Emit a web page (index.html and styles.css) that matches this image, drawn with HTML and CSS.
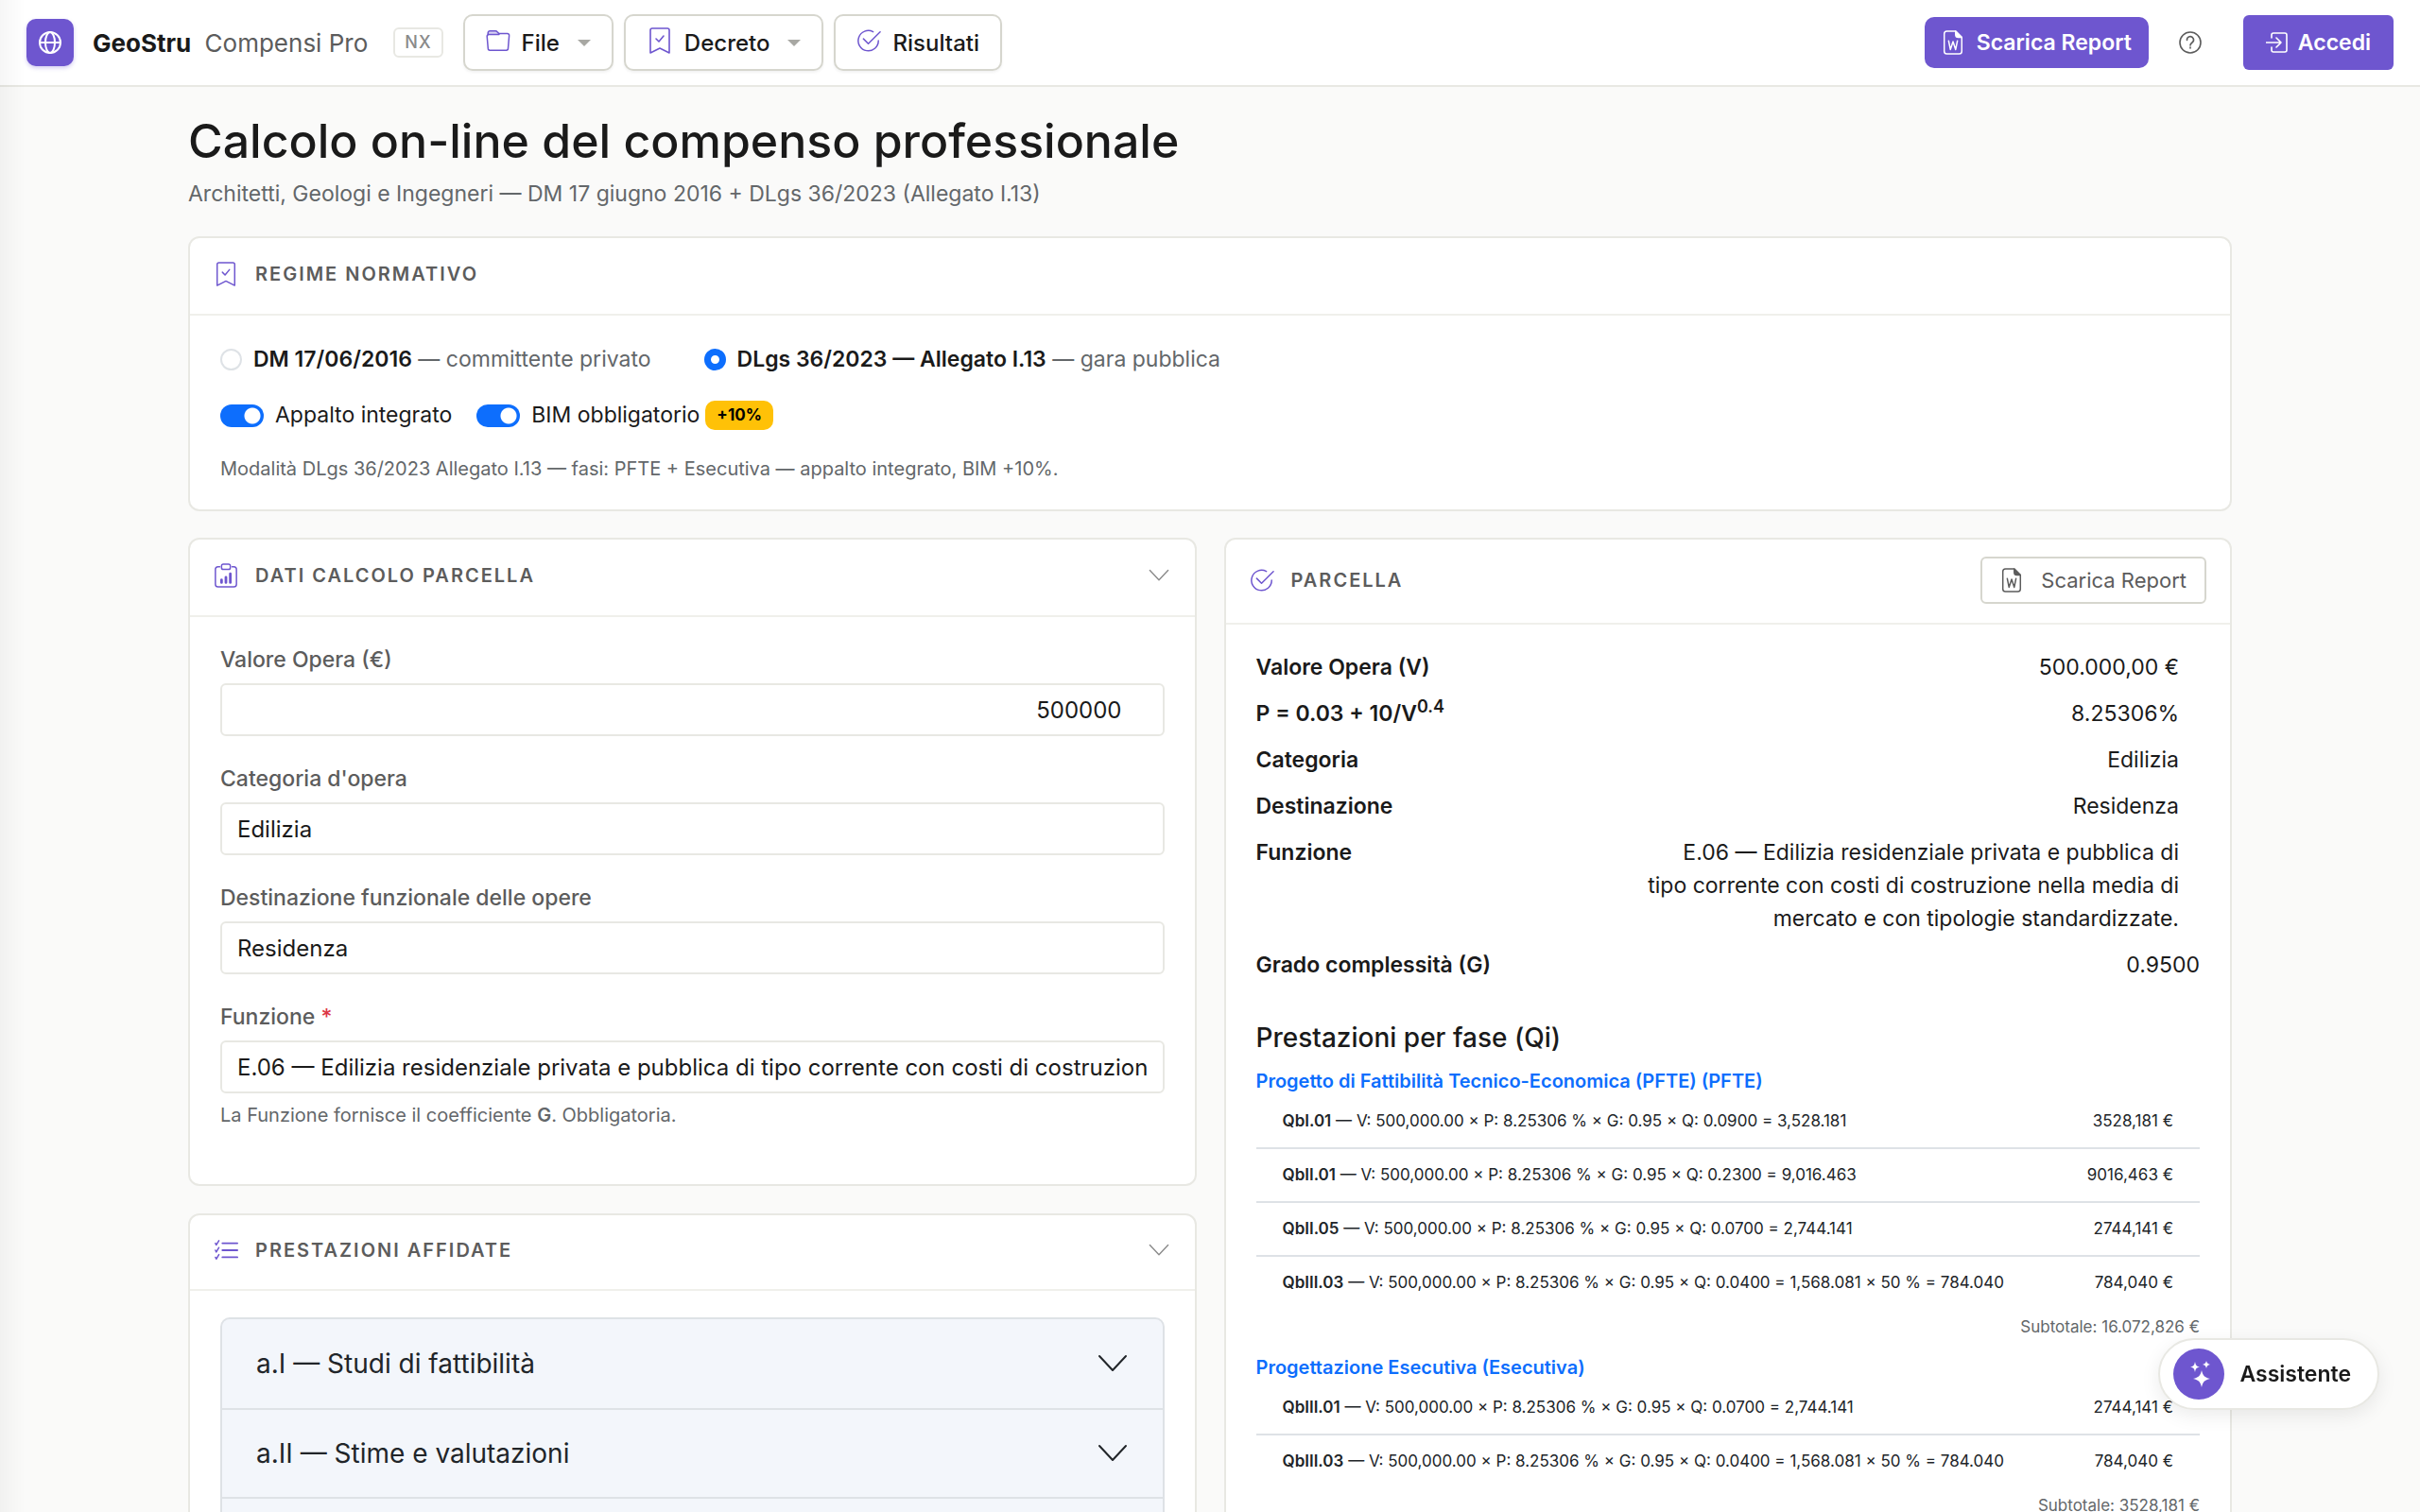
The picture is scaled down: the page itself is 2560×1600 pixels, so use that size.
FILE: index.html
```html
<!DOCTYPE html>
<html lang="it">
<head>
    <meta charset="UTF-8">
    <meta name="viewport" content="width=device-width, initial-scale=1.0">
    <title>GeoStru Compensi Pro</title>
    <link rel="stylesheet" href="styles.css">
</head>
<body>
    <!-- Shared icons -->
    <svg class="sprite" aria-hidden="true">
        <symbol id="i-globe" viewBox="0 0 24 24"><circle cx="12" cy="12" r="11"/><ellipse cx="12" cy="12" rx="5" ry="11"/><path d="M1 12h22"/></symbol>
        <symbol id="i-folder" viewBox="0 0 28 28"><path class="tab" d="M2 7 2.500 5a2 2 0 0 1 2-2h6.500a3 3 0 0 1 2 1l3 3z"/><path d="M2 8 2.500 5a2 2 0 0 1 2-2h6.500a3 3 0 0 1 2 1l1 1a3 3 0 0 0 2 1h8.500a2 2 0 0 1 2 2.500l-1.200 14.500a2 2 0 0 1-2 2H4.500a2 2 0 0 1-2-2L1.300 9a2 2 0 0 1 2-2H15"/></symbol>
        <symbol id="i-bookmark" viewBox="0 0 28 28"><path d="M4 27V3a2 2 0 0 1 2-2h16a2 2 0 0 1 2 2v24l-10-5z"/><path d="m10 12 3 3 5-6"/></symbol>
        <symbol id="i-check" viewBox="0 0 28 28"><path d="M19 4A11.500 11.500 0 1 0 25 14"/><path d="m8 12 5.500 5.500L27 4"/></symbol>
        <symbol id="i-clipboard" viewBox="0 0 28 28"><path d="M7 4H5a3 3 0 0 0-3 3v17a3 3 0 0 0 3 3h18a3 3 0 0 0 3-3V7a3 3 0 0 0-3-3h-2"/><rect x="9" y="1" width="10" height="6" rx="2"/><path class="bars" d="M9 19v3M14 16v6M19 12v10"/></symbol>
        <symbol id="i-list" viewBox="0 0 28 28"><path class="rules" d="M10 6h17M10 14h17M10 22h17"/><path d="M2 6l1 2 3-5M2 14l1 2 3-5M2 22l1 2 3-5"/></symbol>
        <symbol id="i-word" viewBox="0 0 22 28"><path d="M4 1h10l7 7v16a3 3 0 0 1-3 3H4a3 3 0 0 1-3-3V4a3 3 0 0 1 3-3z"/><path class="fold" d="M14 1v4a3 3 0 0 0 3 3h4z"/><path d="m6 12 2 10 3-9 3 9 2-10"/></symbol>
        <symbol id="i-help" viewBox="0 0 24 24"><circle cx="12" cy="12" r="11"/><path d="M8.500 9.500a3.500 3.500 0 1 1 5.500 2.500c-1.300.9-2 1.500-2 3"/><path d="M12 17v1"/></symbol>
        <symbol id="i-login" viewBox="0 0 24 24"><path d="M6 7V4a2 2 0 0 1 2-2h12a2 2 0 0 1 2 2v16a2 2 0 0 1-2 2H8a2 2 0 0 1-2-2v-3M0 12h16M11 7l5 5-5 5"/></symbol>
        <symbol id="i-chevron" viewBox="0 0 32 32"><path d="m2 8 14 15L30 8"/></symbol>
        <symbol id="i-sparkle" viewBox="0 0 32 32"><path d="M19 12c1.400 6 3 7.500 9 9-6 1.500-7.600 3-9 9-1.400-6-3-7.500-9-9 6-1.500 7.600-3 9-9zM12 3c.8 4 1.600 4.800 5 5.500-3.400.8-4.200 1.600-5 5.500-.8-3.900-1.600-4.700-5-5.500 3.400-.7 4.200-1.500 5-5.500zM24 2c.6 2.400 1.200 3 4 4-2.800.8-3.400 1.500-4 4-.6-2.500-1.200-3.200-4-4 2.800-1 3.400-1.600 4-4z"/></symbol>
    </svg>

    <header class="topbar">
        <span class="logo"><svg class="icon"><use href="#i-globe"/></svg></span>
        <span class="brand"><strong>GeoStru</strong> <span>Compensi Pro</span></span>
        <span class="edition">NX</span>
        <nav class="menu">
            <button type="button" class="menu-button"><svg class="icon"><use href="#i-folder"/></svg>File<span class="caret"></span></button>
            <button type="button" class="menu-button"><svg class="icon tall"><use href="#i-bookmark"/></svg>Decreto<span class="caret"></span></button>
            <button type="button" class="menu-button"><svg class="icon"><use href="#i-check"/></svg>Risultati</button>
        </nav>
        <div class="actions">
            <button type="button" class="btn-primary report"><svg class="icon"><use href="#i-word"/></svg>Scarica Report</button>
            <button type="button" class="help" aria-label="Aiuto"><svg class="icon"><use href="#i-help"/></svg></button>
            <button type="button" class="btn-primary login"><svg class="icon"><use href="#i-login"/></svg>Accedi</button>
        </div>
    </header>

    <main>
        <div class="container">
            <h1>Calcolo on-line del compenso professionale</h1>
            <p class="subtitle">Architetti, Geologi e Ingegneri — DM 17 giugno 2016 + DLgs 36/2023 (Allegato I.13)</p>

            <section class="card">
                <div class="card-header">
                    <svg class="icon"><use href="#i-bookmark"/></svg>
                    <h2>Regime normativo</h2>
                </div>
                <div class="card-body regime">
                    <div class="radios">
                        <label><input type="radio" name="regime"><span><strong>DM 17/06/2016</strong> — committente privato</span></label>
                        <label><input type="radio" name="regime" checked><span><strong>DLgs 36/2023 — Allegato I.13</strong> — gara pubblica</span></label>
                    </div>
                    <div class="switches">
                        <label><input type="checkbox" class="switch" checked>Appalto integrato</label>
                        <label><input type="checkbox" class="switch" checked>BIM obbligatorio <span class="badge">+10%</span></label>
                    </div>
                    <p class="hint">Modalità DLgs 36/2023 Allegato I.13 — fasi: PFTE + Esecutiva — appalto integrato, BIM +10%.</p>
                </div>
            </section>

            <div class="columns">
                <div class="column">
                    <section class="card">
                        <div class="card-header">
                            <svg class="icon"><use href="#i-clipboard"/></svg>
                            <h2>Dati calcolo parcella</h2>
                            <button type="button" class="toggle" aria-label="Comprimi"><svg class="icon"><use href="#i-chevron"/></svg></button>
                        </div>
                        <form class="card-body form">
                            <div class="field">
                                <label for="valore">Valore Opera (€)</label>
                                <input type="text" id="valore" class="amount" value="500000">
                            </div>
                            <div class="field">
                                <label for="categoria">Categoria d'opera</label>
                                <input type="text" id="categoria" value="Edilizia">
                            </div>
                            <div class="field">
                                <label for="destinazione">Destinazione funzionale delle opere</label>
                                <input type="text" id="destinazione" value="Residenza">
                            </div>
                            <div class="field">
                                <label for="funzione">Funzione <span class="required">*</span></label>
                                <input type="text" id="funzione" value="E.06 — Edilizia residenziale privata e pubblica di tipo corrente con costi di costruzione nella media di mercato e con tipologie standardizzate.">
                                <p class="hint">La Funzione fornisce il coefficiente <strong>G</strong>. Obbligatoria.</p>
                            </div>
                        </form>
                    </section>

                    <section class="card">
                        <div class="card-header compact">
                            <svg class="icon"><use href="#i-list"/></svg>
                            <h2>Prestazioni affidate</h2>
                            <button type="button" class="toggle" aria-label="Comprimi"><svg class="icon"><use href="#i-chevron"/></svg></button>
                        </div>
                        <div class="card-body">
                            <div class="accordion">
                                <button type="button">a.I — Studi di fattibilità<svg class="icon"><use href="#i-chevron"/></svg></button>
                                <button type="button">a.II — Stime e valutazioni<svg class="icon"><use href="#i-chevron"/></svg></button>
                                <button type="button" aria-label="a.III"><svg class="icon"><use href="#i-chevron"/></svg></button>
                            </div>
                        </div>
                    </section>
                </div>

                <div class="column">
                    <section class="card">
                        <div class="card-header with-button">
                            <svg class="icon"><use href="#i-check"/></svg>
                            <h2>Parcella</h2>
                            <button type="button" class="btn-outline"><svg class="icon"><use href="#i-word"/></svg>Scarica Report</button>
                        </div>
                        <div class="card-body result">
                            <dl class="summary">
                                <div><dt>Valore Opera (V)</dt><dd>500.000,00 €</dd></div>
                                <div><dt>P = 0.03 + 10/V<sup>0.4</sup></dt><dd>8.25306%</dd></div>
                                <div><dt>Categoria</dt><dd>Edilizia</dd></div>
                                <div><dt>Destinazione</dt><dd>Residenza</dd></div>
                                <div><dt>Funzione</dt><dd>E.06 — Edilizia residenziale privata e pubblica di tipo corrente con costi di costruzione nella media di mercato e con tipologie standardizzate.</dd></div>
                                <div class="grade"><dt>Grado complessità (G)</dt><dd>0.9500</dd></div>
                            </dl>

                            <h3>Prestazioni per fase (Qi)</h3>

                            <h4>Progetto di Fattibilità Tecnico-Economica (PFTE) (PFTE)</h4>
                            <table>
                                <tr><td><strong>QbI.01</strong> — V: 500,000.00 × P: 8.25306 % × G: 0.95 × Q: 0.0900 = 3,528.181</td><td>3528,181 €</td></tr>
                                <tr><td><strong>QbII.01</strong> — V: 500,000.00 × P: 8.25306 % × G: 0.95 × Q: 0.2300 = 9,016.463</td><td>9016,463 €</td></tr>
                                <tr><td><strong>QbII.05</strong> — V: 500,000.00 × P: 8.25306 % × G: 0.95 × Q: 0.0700 = 2,744.141</td><td>2744,141 €</td></tr>
                                <tr><td><strong>QbIII.03</strong> — V: 500,000.00 × P: 8.25306 % × G: 0.95 × Q: 0.0400 = 1,568.081 × 50 % = 784.040</td><td>784,040 €</td></tr>
                            </table>
                            <p class="subtotal">Subtotale: 16.072,826 €</p>

                            <h4>Progettazione Esecutiva (Esecutiva)</h4>
                            <table>
                                <tr><td><strong>QbIII.01</strong> — V: 500,000.00 × P: 8.25306 % × G: 0.95 × Q: 0.0700 = 2,744.141</td><td>2744,141 €</td></tr>
                                <tr><td><strong>QbIII.03</strong> — V: 500,000.00 × P: 8.25306 % × G: 0.95 × Q: 0.0400 = 1,568.081 × 50 % = 784.040</td><td>784,040 €</td></tr>
                            </table>
                            <p class="subtotal">Subtotale: 3528,181 €</p>
                        </div>
                    </section>
                </div>
            </div>
        </div>
    </main>

    <button type="button" class="assistant"><span class="assistant-icon"><svg class="icon"><use href="#i-sparkle"/></svg></span>Assistente</button>
    <div class="edge-shadow"></div>
</body>
</html>
```

FILE: styles.css
```css
:root {
    --purple: #6e56cf;
    --blue: #0d6efd;
    --text: #1a1a1a;
    --muted: #5c5c5c;
    --border: #e8e8e3;
    --border-strong: #d6d6ce;
}

* {
    box-sizing: border-box;
}

body {
    margin: 0;
    height: 100vh;
    display: flex;
    flex-direction: column;
    overflow: hidden;
    background: #fafaf9;
    color: var(--text);
    font-family: Inter, "Liberation Sans", sans-serif;
    font-size: 23px;
    line-height: 35px;
}

h1, h2, h3, h4, p, dl, dd {
    margin: 0;
}

button, input {
    font: inherit;
    color: inherit;
}

button {
    display: flex;
    align-items: center;
    background: none;
    border: 0;
    padding: 0;
    cursor: pointer;
}

strong {
    font-weight: 600;
}

.sprite {
    position: absolute;
    width: 0;
    height: 0;
}

.icon {
    flex: none;
    width: 26px;
    height: 28px;
    fill: none;
    stroke: currentColor;
    stroke-width: 1.6;
    stroke-linecap: round;
    stroke-linejoin: round;
}

.bars {
    stroke-width: 3;
}

.rules {
    stroke-width: 2;
}

.fold {
    fill: currentColor;
}

.tab {
    fill: #d9d3f2;
    stroke: none;
}

/* Top bar */
.topbar {
    flex: none;
    display: flex;
    align-items: center;
    height: 92px;
    padding: 0 28px;
    background: #fff;
    border-bottom: 2px solid var(--border);
}

.logo {
    display: flex;
    align-items: center;
    justify-content: center;
    width: 50px;
    height: 50px;
    border-radius: 10px;
    background: var(--purple);
    color: #fff;
    box-shadow: 0 2px 4px rgba(110, 86, 207, 0.3);
}

.logo .icon {
    width: 24px;
    height: 24px;
    stroke-width: 2;
}

.brand {
    margin-left: 20px;
    font-size: 26px;
    color: var(--muted);
    white-space: nowrap;
}

.brand strong {
    margin-right: 7px;
    color: var(--text);
    font-weight: 700;
}

.edition {
    margin-left: 27px;
    height: 32px;
    padding: 0 10px;
    border: 2px solid var(--border);
    border-radius: 6px;
    color: #8a8a8a;
    font-size: 18px;
    font-weight: 500;
    line-height: 28px;
    letter-spacing: 1px;
}

.menu {
    display: flex;
    gap: 11px;
    margin-left: 21px;
}

.menu-button {
    height: 60px;
    padding: 0 22px;
    border: 2px solid var(--border-strong);
    border-radius: 10px;
    background: #fff;
    box-shadow: 0 2px 3px rgba(0, 0, 0, 0.05);
    font-size: 24px;
    font-weight: 500;
}

.menu-button .icon {
    margin: 0 12px 4px 0;
    color: var(--purple);
}

.menu-button .tall {
    width: 28px;
}

.caret {
    margin-left: 19px;
    border: 7px solid transparent;
    border-top-color: #a8a8a3;
    border-bottom: 0;
}

.actions {
    display: flex;
    align-items: center;
    margin-left: auto;
}

.btn-primary {
    background: var(--purple);
    color: #fff;
    font-weight: 600;
}

.report {
    height: 54px;
    padding: 0 18px;
    gap: 13px;
    border-radius: 10px;
}

.report .icon {
    width: 24px;
    height: 26px;
}

.help {
    margin: 0 44px 0 32px;
    color: var(--muted);
}

.help .icon {
    width: 24px;
    height: 24px;
}

.login {
    height: 58px;
    padding: 0 24px;
    gap: 10px;
    border-radius: 6px;
}

.login .icon {
    width: 24px;
    height: 24px;
}

/* Page */
main {
    flex: 1;
    min-height: 0;
    overflow-y: auto;
    scrollbar-width: none;
}

.container {
    max-width: 2162px;
    margin: 0 auto;
    padding: 27px 0;
}

h1 {
    font-size: 50px;
    line-height: 60px;
    font-weight: 500;
}

.subtitle {
    margin: 9px 0 27px;
    color: #63676a;
}

.card {
    background: #fff;
    border: 2px solid var(--border);
    border-radius: 12px;
}

.card-header {
    display: flex;
    align-items: center;
    height: 82px;
    padding: 0 25px 4px;
    border-bottom: 2px solid #f0f0eb;
}

.card-header > .icon {
    margin-right: 18px;
    color: var(--purple);
}

.card-header.compact {
    height: 80px;
}

.card-header.with-button {
    height: 90px;
    padding-bottom: 2px;
}

h2 {
    color: var(--muted);
    font-size: 20px;
    font-weight: 600;
    letter-spacing: 2px;
    text-transform: uppercase;
}

.toggle {
    margin-left: auto;
    padding-right: 2px;
    color: #8a8a8a;
}

.toggle .icon {
    width: 22px;
    height: 22px;
    stroke-width: 2;
}

.btn-outline {
    height: 50px;
    margin-left: auto;
    padding: 0 19px;
    gap: 19px;
    border: 2px solid var(--border-strong);
    border-radius: 6px;
    color: var(--muted);
    font-size: 22px;
}

.btn-outline .icon {
    width: 24px;
    height: 26px;
}

.card-body {
    padding: 28px 32px;
}

.hint {
    color: #63676a;
    font-size: 20px;
    line-height: 30px;
}

/* Regime */
.regime {
    display: flex;
    flex-direction: column;
    gap: 24px;
    padding-top: 29px;
}

.radios, .switches, .radios label, .switches label {
    display: flex;
    align-items: center;
}

.radios {
    gap: 56px;
    color: #63676a;
}

.radios strong {
    color: var(--text);
}

.radios label, .switches label {
    gap: 12px;
}

.switches {
    gap: 26px;
}

.radios input {
    appearance: none;
    width: 23px;
    height: 23px;
    margin: 0;
    border: 2px solid #dee2e6;
    border-radius: 50%;
}

.radios input:checked {
    border: 7px solid var(--blue);
}

.switch {
    appearance: none;
    width: 46px;
    height: 24px;
    margin: 0;
    border-radius: 12px;
    background: var(--blue) radial-gradient(circle at 34px 12px, #fff 8px, transparent 9px);
}

.badge {
    margin-left: -6px;
    padding: 0 12px;
    border-radius: 10px;
    background: #ffc107;
    color: #000;
    font-size: 17px;
    font-weight: 700;
    line-height: 31px;
}

/* Columns */
.columns {
    display: grid;
    grid-template-columns: 1fr 1fr;
    align-items: start;
    gap: 29px;
    margin-top: 28px;
}

.column {
    display: grid;
    gap: 29px;
    min-width: 0;
}

.form {
    display: grid;
    gap: 28px;
    padding-bottom: 58px;
}

.field label {
    display: block;
    margin-bottom: 7px;
    color: var(--muted);
    font-weight: 500;
}

.field input {
    display: block;
    width: 100%;
    height: 56px;
    padding: 0 16px;
    border: 2px solid var(--border);
    border-radius: 6px;
    background: #fff;
    font-size: 24px;
}

.field .amount {
    padding-right: 43px;
    text-align: right;
}

.field .hint {
    margin-top: 8px;
}

.required {
    color: #dc3545;
}

.accordion {
    border: 2px solid #dee2e6;
    border-radius: 10px;
    background: #f3f6fb;
}

.accordion button {
    justify-content: space-between;
    width: 100%;
    height: 94px;
    padding: 0 37px 0 36px;
    color: #212529;
    font-size: 28px;
}

.accordion button + button {
    border-top: 2px solid #dee2e6;
}

.accordion .icon {
    width: 32px;
    height: 32px;
    stroke-width: 2;
}

/* Result */
.summary > div {
    display: flex;
    justify-content: space-between;
    margin-bottom: 14px;
    padding-right: 22px;
}

.summary .grade {
    margin-bottom: 0;
    padding-right: 0;
}

.summary dt {
    font-weight: 600;
}

.summary dd {
    max-width: 566px;
    text-align: right;
}

sup {
    font-size: 18px;
    line-height: 0;
}

h3 {
    margin-top: 40px;
    font-size: 28px;
    line-height: 38px;
    font-weight: 500;
}

h4 {
    margin-top: 12px;
    color: var(--blue);
    font-size: 20px;
    line-height: 30px;
    font-weight: 600;
}

table {
    width: 100%;
    border-collapse: collapse;
    color: #212529;
    font-size: 17px;
    line-height: 27px;
}

td {
    padding: 14px 28px;
}

td:last-child {
    text-align: right;
    white-space: nowrap;
}

tr + tr td {
    border-top: 2px solid #dee2e6;
}

.subtotal {
    margin: 6px 0 14px;
    color: #63676a;
    font-size: 17px;
    line-height: 27px;
    text-align: right;
}

/* Floating items */
.assistant {
    position: fixed;
    right: 43px;
    bottom: 108px;
    height: 76px;
    padding: 0 28px 0 14px;
    gap: 16px;
    border: 2px solid var(--border);
    border-radius: 38px;
    background: #fff;
    box-shadow: 0 6px 20px rgba(0, 0, 0, 0.08);
    font-weight: 600;
}

.assistant-icon {
    display: flex;
    align-items: center;
    justify-content: center;
    width: 54px;
    height: 54px;
    border-radius: 50%;
    background: var(--purple);
    color: #fff;
}

.assistant-icon .icon {
    width: 32px;
    height: 32px;
    fill: currentColor;
    stroke: none;
}

.edge-shadow {
    position: fixed;
    inset: 0 auto 0 0;
    width: 26px;
    background: linear-gradient(to right, rgba(0, 0, 0, 0.035), transparent);
    pointer-events: none;
}
```
